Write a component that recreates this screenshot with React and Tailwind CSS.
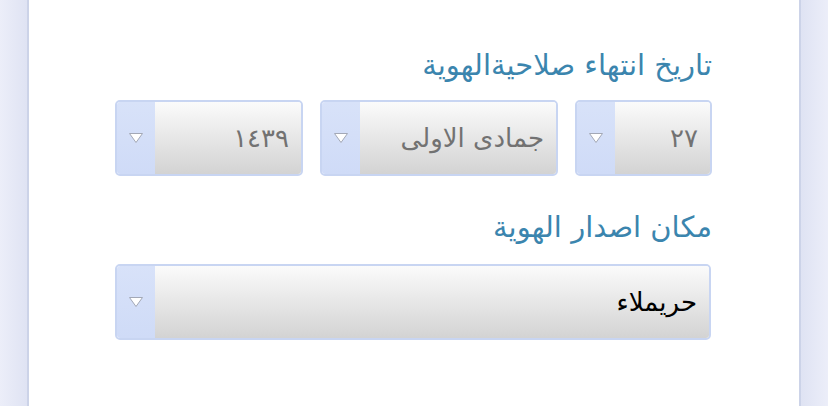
import React from "react";

const Arrow = () => (
  <svg width="18" height="14" viewBox="0 0 18 14" className="shrink-0">
    <path d="M2.5 2.5 L15.5 2.5 L9 11.5 Z" fill="#ffffff" stroke="#a3a8b6" strokeWidth="1" strokeLinejoin="round" />
  </svg>
);

const Select = ({ value, width, dark }) => (
  <div className={`flex h-[76px] rounded-[5px] border-2 border-[#c8d5f2] overflow-hidden ${width}`}>
    <div className="w-[38px] flex items-center justify-center bg-gradient-to-b from-[#d8e2f9] to-[#cfdbf7]">
      <Arrow />
    </div>
    <div
      dir="rtl"
      className="flex-1 flex items-center pr-3 bg-gradient-to-b from-[#fbfbfb] to-[#d3d3d3]"
    >
      <span className={`text-[26px] ${dark ? "text-black" : "text-[#727272]"}`}>{value}</span>
    </div>
  </div>
);

export default function App() {
  return (
    <div
      className="flex w-[828px] h-[406px] overflow-hidden bg-white"
      style={{ fontFamily: '"DejaVu Sans", "Noto Sans", sans-serif' }}
    >
      <div className="w-[30px] bg-gradient-to-r from-[#eceef9] to-[#dfe3f3] border-r-2 border-[#ccd3e8]" />
      <div className="flex-1 bg-white pt-[46px] pl-[86px] pr-[87px]">
        <h2 dir="rtl" className="text-[29px] text-[#3b85ae] leading-[38px]">
          تاريخ انتهاء صلاحيةالهوية
        </h2>
        <div className="flex justify-end gap-[17px] mt-[16px]">
          <Select value="١٤٣٩" width="w-[188px]" />
          <Select value="جمادى الاولى" width="w-[238px]" />
          <Select value="٢٧" width="w-[137px]" />
        </div>
        <h2 dir="rtl" className="text-[29px] text-[#3b85ae] leading-[38px] mt-[32px]">
          مكان اصدار الهوية
        </h2>
        <div className="flex mt-[18px]">
          <Select value="حريملاء" width="w-[596px]" dark />
        </div>
      </div>
      <div className="w-[30px] bg-gradient-to-r from-[#dfe3f3] to-[#eceef9] border-l-2 border-[#ccd3e8]" />
    </div>
  );
}
